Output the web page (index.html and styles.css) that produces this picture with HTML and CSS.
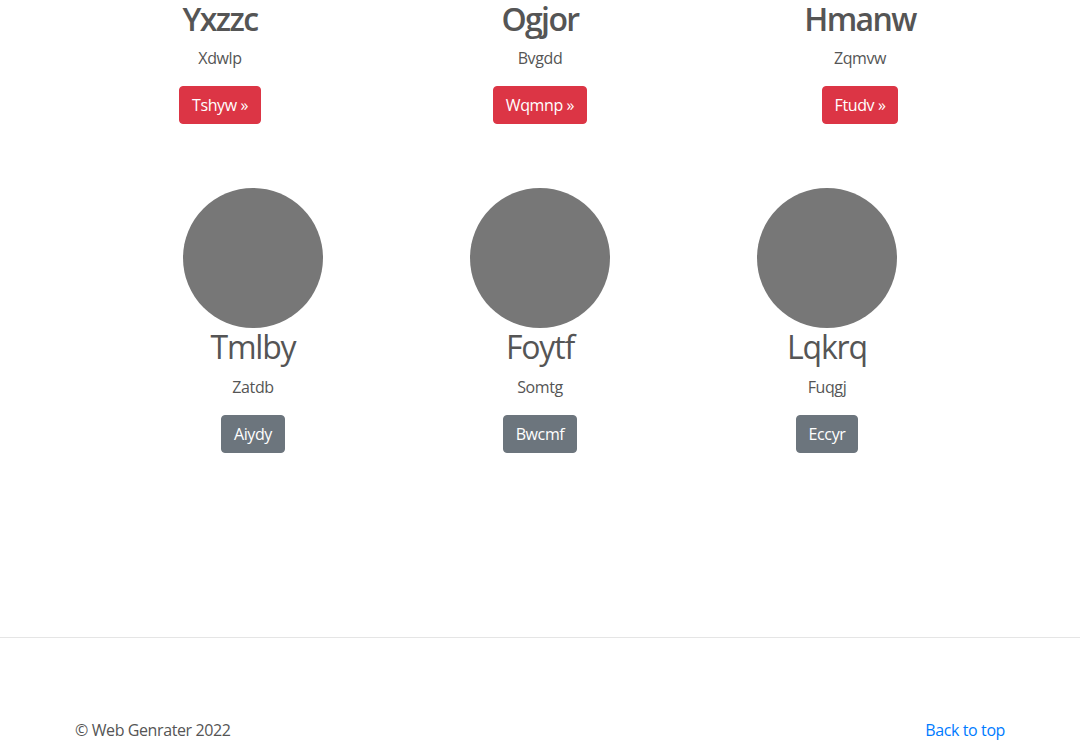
FILE: index.html
```html
<!DOCTYPE html>
<html lang="en">
<head>
<meta charset="utf-8">
<title>Marketing</title>
<link rel="stylesheet" href="styles.css">
</head>
<body>
<main class="container marketing">
  <div class="row row-top">
    <div class="col">
      <h2 class="title-strong">Yxzzc</h2>
      <p>Xdwlp</p>
      <a class="btn btn-danger" href="#">Tshyw &raquo;</a>
    </div>
    <div class="col">
      <h2 class="title-strong">Ogjor</h2>
      <p>Bvgdd</p>
      <a class="btn btn-danger" href="#">Wqmnp &raquo;</a>
    </div>
    <div class="col">
      <h2 class="title-strong">Hmanw</h2>
      <p>Zqmvw</p>
      <a class="btn btn-danger" href="#">Ftudv &raquo;</a>
    </div>
  </div>
  <div class="row row-people">
    <div class="col">
      <div class="avatar"></div>
      <h2 class="title-light">Tmlby</h2>
      <p>Zatdb</p>
      <a class="btn btn-secondary" href="#">Aiydy</a>
    </div>
    <div class="col">
      <div class="avatar"></div>
      <h2 class="title-light">Foytf</h2>
      <p>Somtg</p>
      <a class="btn btn-secondary" href="#">Bwcmf</a>
    </div>
    <div class="col">
      <div class="avatar"></div>
      <h2 class="title-light">Lqkrq</h2>
      <p>Fuqgj</p>
      <a class="btn btn-secondary" href="#">Eccyr</a>
    </div>
  </div>
</main>
<hr class="divider">
<footer class="container footer">
  <p class="copy">&copy; Web Genrater 2022</p>
  <a class="back" href="#">Back to top</a>
</footer>
</body>
</html>
```

FILE: styles.css
```css
* { box-sizing: border-box; }
html, body { margin: 0; padding: 0; }
body {
  font-family: "Open Sans", "Noto Sans", sans-serif;
  font-size: 16px;
  line-height: 1.5;
  letter-spacing: -0.4px;
  color: #555;
  background: #fff;
}
.container {
  width: 960px;
  margin: 0 auto;
  padding: 0 15px;
}
.row {
  display: flex;
  margin: 0 -15px;
}
.col {
  flex: 1 1 0;
  padding: 0 15px;
  text-align: center;
  display: flex;
  flex-direction: column;
  align-items: center;
}
.row-people {
  width: 861px;
  margin: 64px auto 0;
}
h2 {
  margin: 0 0 8px;
  font-size: 32px;
  line-height: 38.4px;
  color: #555;
}
.title-strong { font-weight: 600; letter-spacing: -1.6px; }
.title-light { font-weight: 400; letter-spacing: -1.2px; }
p {
  margin: 0 0 16px;
}
.btn {
  display: inline-block;
  height: 38px;
  padding: 6px 12px;
  font-size: 16px;
  line-height: 24px;
  border-radius: 4px;
  color: #fff;
  text-decoration: none;
  border: 1px solid transparent;
}
.btn-danger { background: #dc3545; border-color: #dc3545; }
.btn-secondary { background: #6c757d; border-color: #6c757d; }
.avatar {
  width: 140px;
  height: 140px;
  border-radius: 50%;
  background: #777;
}
.divider {
  margin: 184px 0 80px;
  border: 0;
  border-top: 1px solid rgba(0,0,0,0.1);
  height: 0;
}
.footer {
  display: flex;
  justify-content: space-between;
  align-items: flex-start;
}
.copy { margin: 0 0 16px; }
.back { color: #007bff; text-decoration: none; }
```
